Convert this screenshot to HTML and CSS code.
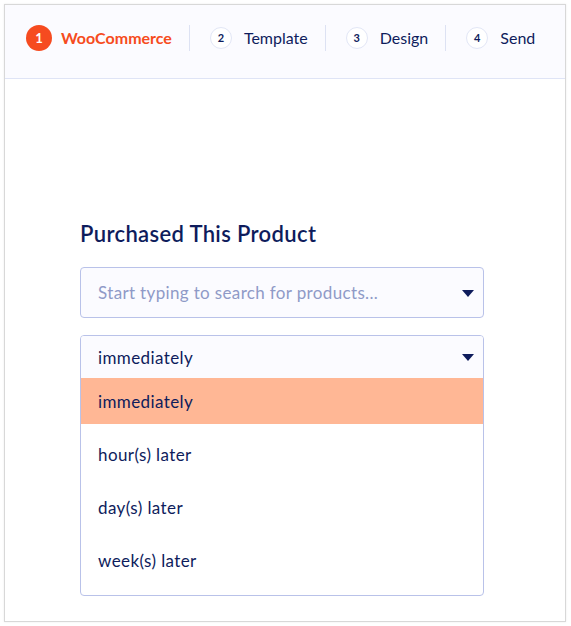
FILE: index.html
```html
<!DOCTYPE html>
<html>
<head>
<meta charset="utf-8">
<link rel="stylesheet" href="styles.css">
</head>
<body>
<div class="card">
  <div class="steps">
    <div class="step active"><span class="num">1</span><span class="label">WooCommerce</span></div>
    <div class="sep"></div>
    <div class="step"><span class="num">2</span><span class="label">Template</span></div>
    <div class="sep"></div>
    <div class="step"><span class="num">3</span><span class="label">Design</span></div>
    <div class="sep"></div>
    <div class="step"><span class="num">4</span><span class="label">Send</span></div>
  </div>
  <div class="content">
    <h2 class="title">Purchased This Product</h2>
    <div class="field search">
      <span class="placeholder">Start typing to search for products...</span>
      <span class="caret"></span>
    </div>
    <div class="select">
      <div class="select-head">
        <span>immediately</span>
        <span class="caret"></span>
      </div>
      <ul class="options">
        <li class="opt selected">immediately</li>
        <li class="opt">hour(s) later</li>
        <li class="opt">day(s) later</li>
        <li class="opt">week(s) later</li>
      </ul>
    </div>
  </div>
</div>
</body>
</html>
```
FILE: styles.css
```css
* { box-sizing: border-box; }
html, body { margin: 0; padding: 0; background: #ffffff; }
body {
  font-family: "Lato", "Noto Sans", sans-serif;
  color: #0e1c5c;
  padding: 4px 5px 4px 4px;
}
.card {
  width: 562px;
  height: 618px;
  border: 1px solid #d8d8d8;
  box-shadow: 0 0 2px rgba(0,0,0,0.08);
  background: #fff;
  display: flex;
  flex-direction: column;
}
.steps {
  height: 74px;
  background: #fbfbff;
  border-bottom: 1px solid #dfe4f6;
  display: flex;
  align-items: center;
  padding-left: 21px;
  padding-bottom: 8px;
}
.step {
  display: flex;
  align-items: center;
  gap: 12px;
  font-size: 16px;
  color: #0e1c5c;
}
.num {
  width: 22px;
  height: 22px;
  border-radius: 50%;
  background: #fff;
  border: 1px solid #e2e6f6;
  font-size: 11px;
  font-weight: 700;
  display: flex;
  align-items: center;
  justify-content: center;
  color: #0e1c5c;
}
.step.active { gap: 9px; }
.step.active .num {
  width: 26px;
  height: 26px;
  background: #f64b20;
  border: none;
  color: #fff;
  font-size: 13px;
}
.step.active .label {
  color: #f64b20;
  font-weight: 700;
}
.sep {
  width: 1px;
  height: 26px;
  background: #dde2f3;
  margin: 0 20px 0 17px;
}
.content {
  padding: 143px 0 0 75px;
  width: 479px;
}
.title {
  margin: 0 0 21px;
  font-size: 22px;
  line-height: 24px;
  font-weight: 600;
  letter-spacing: 0.35px;
  color: #0e1c5c;
}
.field {
  height: 51px;
  border: 1px solid #b9c2e9;
  border-radius: 4px;
  background: #fbfbff;
  display: flex;
  align-items: center;
  justify-content: space-between;
  padding: 0 9px 0 17px;
}
.placeholder {
  font-size: 17px;
  letter-spacing: 0.35px;
  color: #8f9ac7;
}
.caret {
  width: 0;
  height: 0;
  border-left: 6.5px solid transparent;
  border-right: 6.5px solid transparent;
  border-top: 7px solid #0e1c5c;
  margin-top: 1px;
}
.select {
  margin-top: 17px;
  height: 261px;
  border: 1px solid #b9c2e9;
  border-radius: 4px;
  background: #fff;
  overflow: hidden;
}
.select-head {
  height: 42px;
  background: #fbfbff;
  display: flex;
  align-items: center;
  justify-content: space-between;
  padding: 0 9px 0 17px;
  font-size: 17px;
  letter-spacing: 0.4px;
}
.options {
  list-style: none;
  margin: 0;
  padding: 0;
  display: flex;
  flex-direction: column;
  gap: 7px;
}
.opt {
  height: 46px;
  display: flex;
  align-items: center;
  padding-left: 17px;
  font-size: 17px;
  letter-spacing: 0.4px;
  color: #0e1c5c;
}
.opt.selected { background: #ffb795; }
```
